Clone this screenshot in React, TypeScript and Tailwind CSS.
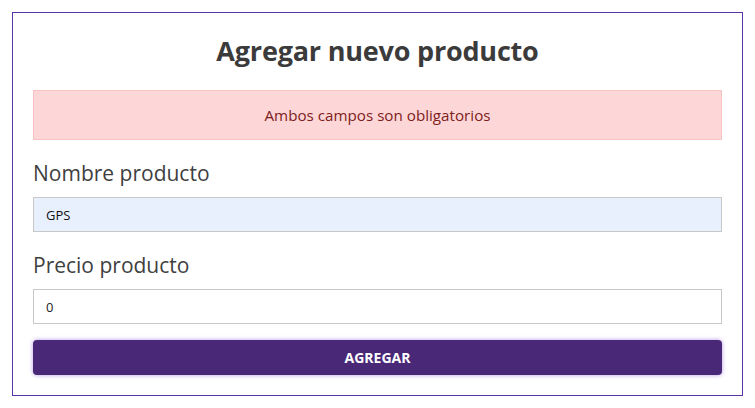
import { useState } from "react";

export default function App() {
  const [nombre, setNombre] = useState("GPS");
  const [precio, setPrecio] = useState("0");

  return (
    <div className="p-[12px] bg-white font-['Open_Sans',sans-serif]">
      <div className="border border-[#5b34a6] px-[20px] pt-[22px] pb-[20px]">
        <h1 className="text-center text-[27px] leading-[32px] font-bold text-[#3b3b3b] tracking-[-0.2px]">
          Agregar nuevo producto
        </h1>

        <div className="mt-[23px] h-[50px] flex items-center justify-center bg-[#fdd7d7] border border-[#f8c2c2] text-[15.2px] text-[#7f2020]">
          Ambos campos son obligatorios
        </div>

        <form className="mt-[17px] flex flex-col" onSubmit={(e) => e.preventDefault()}>
          <label className="text-[21px] leading-[32px] text-[#3f3f3f]">Nombre producto</label>
          <input
            type="text"
            value={nombre}
            onChange={(e) => setNombre(e.target.value)}
            className="mt-[8px] h-[35px] px-[12px] bg-[#e8f0fe] border border-[#c8c8c8] text-[13px] text-[#111] outline-none"
          />

          <label className="mt-[17px] text-[21px] leading-[32px] text-[#3f3f3f]">Precio producto</label>
          <input
            type="number"
            value={precio}
            onChange={(e) => setPrecio(e.target.value)}
            className="mt-[8px] h-[35px] px-[12px] bg-white border border-[#c8c8c8] text-[13px] text-[#222] outline-none"
          />

          <button
            type="submit"
            className="mt-[16px] h-[35px] rounded-[4px] bg-[#4a2878] text-white text-[14px] font-bold shadow-[0_0_4px_rgba(120,70,210,0.55)]"
          >
            AGREGAR
          </button>
        </form>
      </div>
    </div>
  );
}
